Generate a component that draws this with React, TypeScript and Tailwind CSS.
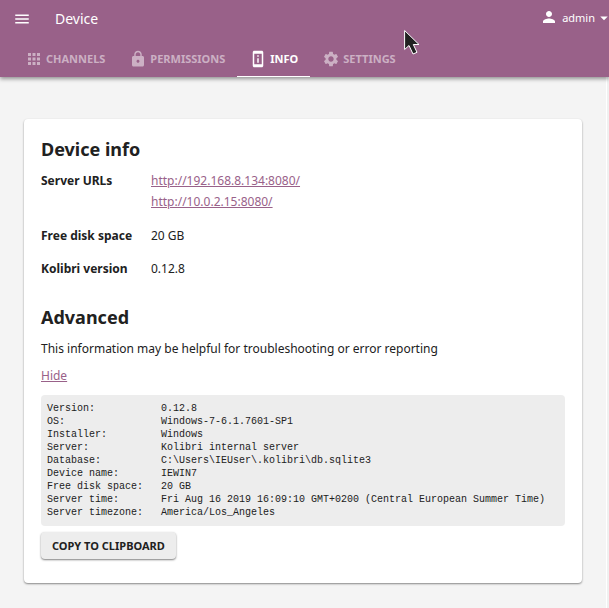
import React from "react";
import {
  MdMenu,
  MdApps,
  MdLock,
  MdPermDeviceInformation,
  MdSettings,
  MdPerson,
  MdArrowDropDown,
} from "react-icons/md";

const tabs = [
  { label: "Channels", Icon: MdApps, active: false },
  { label: "Permissions", Icon: MdLock, active: false },
  { label: "Info", Icon: MdPermDeviceInformation, active: true },
  { label: "Settings", Icon: MdSettings, active: false },
];

const details: [string, string][] = [
  ["Version:", "0.12.8"],
  ["OS:", "Windows-7-6.1.7601-SP1"],
  ["Installer:", "Windows"],
  ["Server:", "Kolibri internal server"],
  ["Database:", "C:\\Users\\IEUser\\.kolibri\\db.sqlite3"],
  ["Device name:", "IEWIN7"],
  ["Free disk space:", "20 GB"],
  ["Server time:", "Fri Aug 16 2019 16:09:10 GMT+0200 (Central European Summer Time)"],
  ["Server timezone:", "America/Los_Angeles"],
];

const report = details.map(([name, value]) => name.padEnd(19) + value).join("\n");

function Header() {
  return (
    <header className="relative z-10 bg-[#996189] text-white shadow-[0_2px_4px_rgba(0,0,0,0.4)]">
      <div className="flex h-[38px] items-center overflow-hidden pl-[13px]">
        <button type="button" aria-label="Menu" className="flex">
          <MdMenu size={18} />
        </button>
        <h1 className="ml-6 flex-1 text-sm">Device</h1>
        <button type="button" className="flex items-center pb-1 text-[11px]">
          <MdPerson size={18} className="mr-1" />
          admin
          <MdArrowDropDown size={18} className="-mr-1 mt-0.5" />
        </button>
      </div>
      <nav className="flex h-[39px] pl-[13px]">
        {tabs.map(({ label, Icon, active }) => (
          <a
            key={label}
            href="#"
            className={
              "flex items-center gap-[3px] border-b px-3 pt-[3px] text-[11px] font-bold uppercase " +
              (active ? "border-white text-white" : "border-transparent text-white/50")
            }
          >
            <Icon size={18} />
            {label}
          </a>
        ))}
      </nav>
      <svg
        className="absolute left-[404px] top-[29px]"
        width="17"
        height="27"
        viewBox="0 0 17 27"
        aria-hidden="true"
      >
        <path
          d="M.6 1.5V20.5L5 16.5L9 25L13 23.3L9.3 15.5H15Z"
          fill="#212121"
          stroke="#fff"
          strokeWidth="1"
        />
      </svg>
    </header>
  );
}

export default function App() {
  return (
    <div className="flex min-h-screen flex-col bg-[#f4f4f4] font-['Noto_Sans',sans-serif] text-[12px] leading-[21px] text-[#212121]">
      <Header />
      <div className="flex flex-1">
        <main className="flex-1 px-6 pb-6 pt-[42px]">
          <section className="rounded-sm bg-white px-[17px] pb-6 pt-[18px] shadow-[0_1px_2px_rgba(0,0,0,0.45)]">
            <h2 className="text-lg font-bold leading-6">Device info</h2>
            <table className="mt-[9px] text-left">
              <tbody>
                <tr>
                  <th className="w-[110px] p-0 pb-[13px] align-top font-bold">Server URLs</th>
                  <td className="p-0 pb-[13px]">
                    <a href="#" className="block text-[#996189] underline">http://192.168.8.134:8080/</a>
                    <a href="#" className="block text-[#996189] underline">http://10.0.2.15:8080/</a>
                  </td>
                </tr>
                <tr>
                  <th className="p-0 pb-3 font-bold">Free disk space</th>
                  <td className="p-0 pb-3">20 GB</td>
                </tr>
                <tr>
                  <th className="p-0 font-bold">Kolibri version</th>
                  <td className="p-0">0.12.8</td>
                </tr>
              </tbody>
            </table>
            <h2 className="mt-[26px] text-lg font-bold leading-6">Advanced</h2>
            <p className="mt-[9px]">This information may be helpful for troubleshooting or error reporting</p>
            <button type="button" className="mt-1.5 block text-[#996189] underline">Hide</button>
            <pre className="mt-[9px] overflow-x-auto rounded-sm bg-[#ededed] px-1.5 py-[7px] font-['Liberation_Mono',monospace] text-[10px] leading-[13px]">
              {report}
            </pre>
            <button
              type="button"
              className="mt-1.5 block h-[27px] rounded-sm bg-[#ededed] px-[11px] text-[11px] font-bold uppercase shadow-[0_1px_2px_rgba(0,0,0,0.5)]"
            >
              Copy to clipboard
            </button>
          </section>
        </main>
        <div className="w-[3px] border-l border-white bg-[#f0f0f0]" />
      </div>
    </div>
  );
}
